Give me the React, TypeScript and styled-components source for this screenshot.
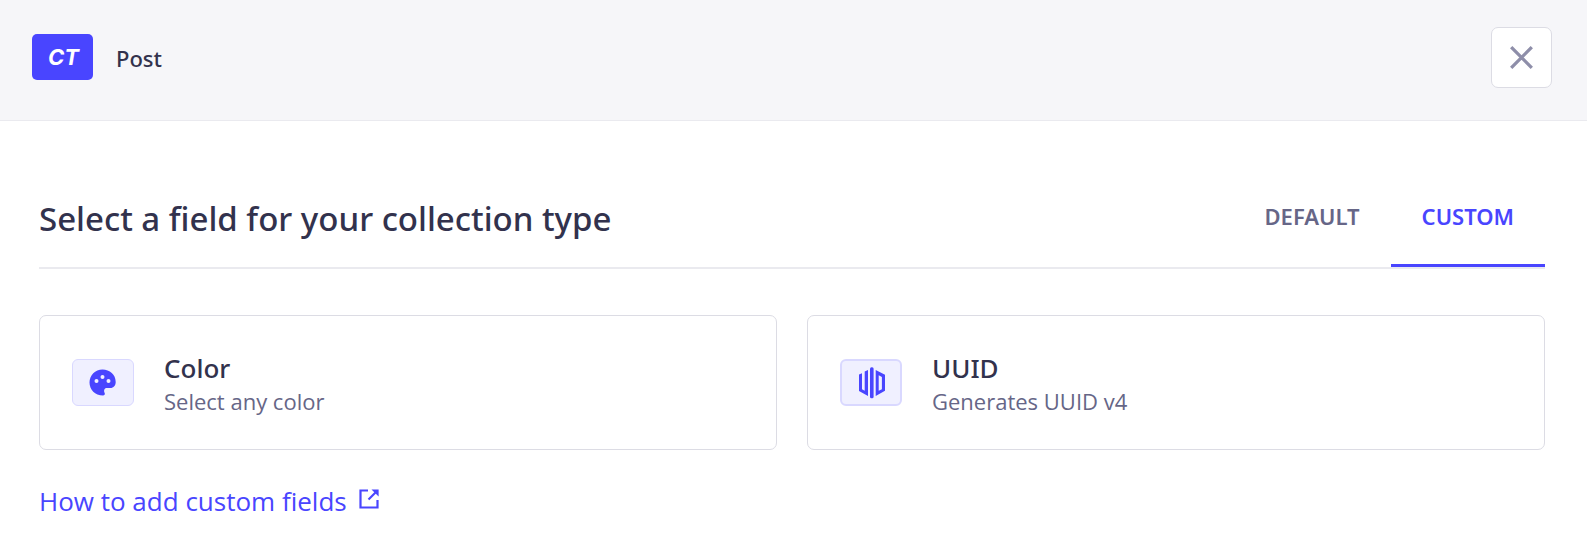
import React from "react";
import styled, { createGlobalStyle } from "styled-components";

const mediumFont = `"Segoe UI", "Noto Sans", sans-serif`;

const GlobalStyle = createGlobalStyle`
  *, *::before, *::after { box-sizing: border-box; }
  body {
    margin: 0;
    background: #ffffff;
    color: #32324d;
    font-family: "Segoe UI", "Open Sans", "Noto Sans", sans-serif;
  }
  h1, h2, p { margin: 0; }
  button { font-family: inherit; cursor: pointer; }
`;

const Header = styled.header`
  display: flex;
  align-items: flex-start;
  justify-content: space-between;
  padding: 27px 35px 32px 32px;
  background: #f6f6f9;
  border-bottom: 1px solid #eaeaef;
`;

const Breadcrumb = styled.div`
  display: flex;
  align-items: center;
  gap: 23px;
  padding-top: 7px;
`;

const TypeBadge = styled.span`
  display: flex;
  align-items: center;
  justify-content: center;
  width: 61px;
  height: 46px;
  padding-left: 2px;
  border-radius: 5px;
  background: #4945ff;
  color: #ffffff;
  font: italic 700 22px/28px Inter, sans-serif;
`;

const ContentTypeName = styled.h1`
  padding-top: 2px;
  font-family: ${mediumFont};
  font-size: 22px;
  line-height: 28px;
  font-weight: 500;
`;

const CloseButton = styled.button`
  display: flex;
  align-items: center;
  justify-content: center;
  width: 61px;
  height: 61px;
  padding: 0;
  border: 1px solid #dcdce4;
  border-radius: 7px;
  background: #ffffff;
  color: #8e8ea9;
`;

const Body = styled.main`
  padding: 60px 42px 40px 39px;
`;

const TitleRow = styled.div`
  display: flex;
  align-items: stretch;
  justify-content: space-between;
  border-bottom: 2px solid #eaeaef;
`;

const Title = styled.h2`
  padding-top: 16px;
  font-family: ${mediumFont};
  font-size: 33px;
  line-height: 44px;
  font-weight: 500;
`;

const Tabs = styled.div`
  display: flex;
`;

const Tab = styled.button<{ $active?: boolean }>`
  padding: 21px 31px 34px;
  border: 0;
  border-bottom: 3px solid ${(p) => (p.$active ? "#4945ff" : "transparent")};
  background: transparent;
  color: ${(p) => (p.$active ? "#4945ff" : "#666687")};
  font-family: ${mediumFont};
  font-size: 22px;
  line-height: 28px;
  font-weight: 600;
  text-transform: uppercase;
`;

const FieldGrid = styled.div`
  display: grid;
  grid-template-columns: 1fr 1fr;
  gap: 30px;
  padding-top: 46px;
`;

const FieldCard = styled.button`
  display: flex;
  align-items: center;
  gap: 30px;
  height: 135px;
  padding: 0 32px;
  border: 1px solid #dcdce4;
  border-radius: 7px;
  background: #ffffff;
  text-align: left;
`;

const FieldIcon = styled.span<{ $thick?: boolean }>`
  display: flex;
  flex: none;
  align-items: center;
  justify-content: center;
  width: 62px;
  height: 47px;
  border: ${(p) => (p.$thick ? 2 : 1)}px solid #d9d8ff;
  border-radius: 6px;
  background: #f0f0ff;
  color: #4945ff;
`;

const FieldText = styled.span`
  display: flex;
  flex-direction: column;
`;

const FieldName = styled.span`
  color: #32324d;
  font-family: ${mediumFont};
  font-size: 26px;
  line-height: 36px;
  font-weight: 500;
`;

const FieldHint = styled.span`
  color: #666687;
  font-size: 22px;
  line-height: 30px;
`;

const HelpLink = styled.a`
  display: inline-flex;
  align-items: center;
  gap: 12px;
  margin-top: 33px;
  color: #4945ff;
  font-size: 26px;
  line-height: 36px;
  text-decoration: none;

  svg { margin-bottom: 4px; }
`;

const CloseIcon = () => (
  <svg width="23" height="23" viewBox="0 0 23 23" fill="none" stroke="currentColor" strokeWidth="3.3" aria-hidden="true">
    <path d="M1.200 1.200 21.800 21.800M21.800 1.200 1.200 21.800" />
  </svg>
);

const PaletteIcon = () => (
  <svg width="28" height="28" viewBox="0 0 28 28" aria-hidden="true">
    <path
      fill="currentColor"
      d="M13.500 .5C6.200.5.500 6.400.5 13.500c0 7 5.500 13 13.500 13 1.400 0 2.200-1.100 1.700-2.400-1.200-2.600-.6-5.200 2.200-5.200h3.400c3.300 0 5.400-2.500 5.400-6C26.700 5.500 20.700.5 13.500.5Z"
    />
    <g fill="#f0f0ff">
      <circle cx="7.500" cy="12" r="2" />
      <circle cx="13.500" cy="8" r="2" />
      <circle cx="19.500" cy="12" r="2" />
    </g>
  </svg>
);

const UuidIcon = () => (
  <svg width="28" height="32" viewBox="0 0 28 32" fill="currentColor" aria-hidden="true">
    <rect x="13" y=".300" width="3.600" height="31" rx="1.500" />
    <path d="M2 7.600 5 6.200V22.300l2.700 1.500V4.600L11 3V29L2 24Z" />
    <path fillRule="evenodd" d="M18.700 3 28 7.800v16L18.700 29ZM21.700 8.300v15.500l3.200-1.600V9.900Z" />
  </svg>
);

const ExternalIcon = () => (
  <svg width="20" height="20" viewBox="0 0 20 20" fill="none" stroke="currentColor" strokeWidth="2.200" aria-hidden="true">
    <path d="M9 1.500H1.500v17h17V11" />
    <path d="M9.500 10.500 17 3" />
    <path d="M12.500 .4h7.100V7.500Z" fill="currentColor" stroke="none" />
  </svg>
);

const fields = [
  { name: "Color", hint: "Select any color", icon: <PaletteIcon />, thick: false },
  { name: "UUID", hint: "Generates UUID v4", icon: <UuidIcon />, thick: true },
];

export default function App() {
  return (
    <>
      <GlobalStyle />
      <Header>
        <Breadcrumb>
          <TypeBadge>CT</TypeBadge>
          <ContentTypeName>Post</ContentTypeName>
        </Breadcrumb>
        <CloseButton type="button" aria-label="Close">
          <CloseIcon />
        </CloseButton>
      </Header>
      <Body>
        <TitleRow>
          <Title>Select a field for your collection type</Title>
          <Tabs role="tablist">
            <Tab type="button" role="tab" aria-selected={false}>Default</Tab>
            <Tab type="button" role="tab" aria-selected $active>Custom</Tab>
          </Tabs>
        </TitleRow>
        <FieldGrid>
          {fields.map((field) => (
            <FieldCard type="button" key={field.name}>
              <FieldIcon $thick={field.thick}>{field.icon}</FieldIcon>
              <FieldText>
                <FieldName>{field.name}</FieldName>
                <FieldHint>{field.hint}</FieldHint>
              </FieldText>
            </FieldCard>
          ))}
        </FieldGrid>
        <HelpLink href="#custom-fields">
          How to add custom fields
          <ExternalIcon />
        </HelpLink>
      </Body>
    </>
  );
}
